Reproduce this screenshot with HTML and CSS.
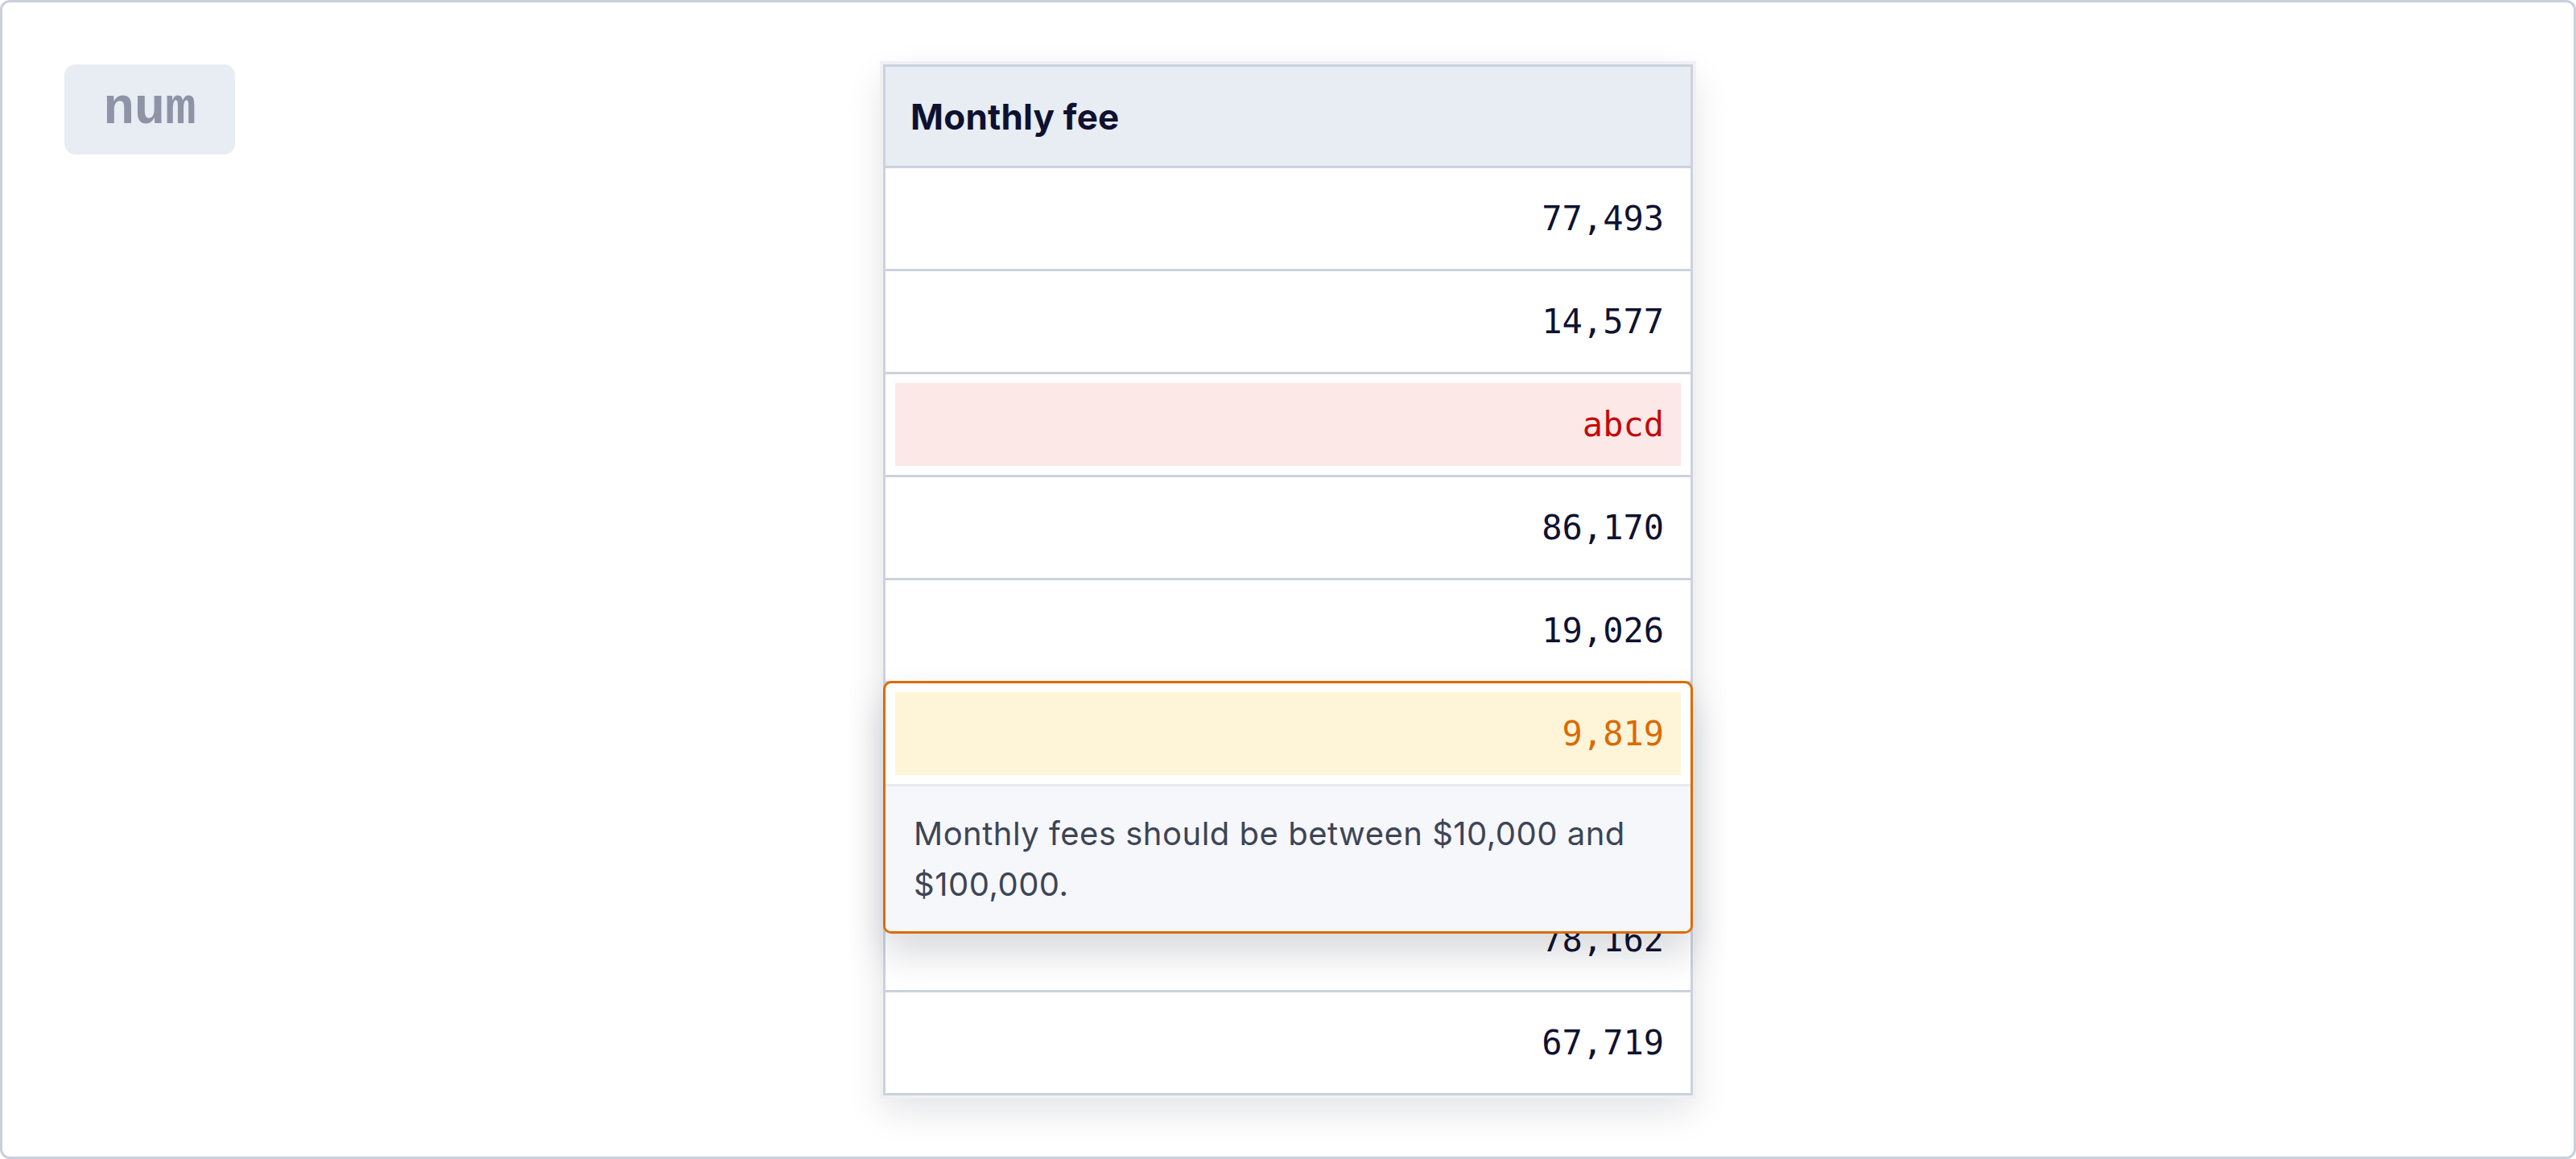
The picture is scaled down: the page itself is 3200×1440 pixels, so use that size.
FILE: index.html
```html
<!DOCTYPE html>
<html lang="en">
<head>
<meta charset="utf-8">
<title>Monthly fee</title>
<link rel="stylesheet" href="styles.css">
</head>
<body>
<div class="frame">
  <div class="badge">num</div>
  <div class="table-wrap">
    <div class="table">
      <div class="head">Monthly fee</div>
      <div class="row"><div class="val">77,493</div></div>
      <div class="row"><div class="val">14,577</div></div>
      <div class="row"><div class="val error">abcd</div></div>
      <div class="row"><div class="val">86,170</div></div>
      <div class="row"><div class="val">19,026</div></div>
      <div class="row"><div class="val"></div></div>
      <div class="row"><div class="val"></div></div>
      <div class="row"><div class="val">78,162</div></div>
      <div class="row"><div class="val">67,719</div></div>
    </div>
    <div class="popup">
      <div class="pcell"><div class="val warn">9,819</div></div>
      <div class="msg">Monthly fees should be between $10,000 and $100,000.</div>
    </div>
  </div>
  <div></div>
</div>
</body>
</html>
```
FILE: styles.css
```css
html, body {
  margin: 0;
  padding: 0;
  background: #ffffff;
}
body {
  width: 3200px;
  height: 1440px;
}
.frame {
  box-sizing: border-box;
  width: 3200px;
  height: 1440px;
  border: 3px solid #c9d0dc;
  border-radius: 12px;
  padding: 77px;
  display: grid;
  grid-template-columns: 1fr 1006px 1fr;
  align-items: start;
}
.badge {
  justify-self: start;
  width: 212px;
  height: 112px;
  border-radius: 14px;
  background: #e8ecf3;
  color: #8e94a6;
  font: 700 64px/112px "Liberation Mono", monospace;
  text-align: center;
}
.table-wrap {
  position: relative;
}
.table {
  border: 3px solid #cbd2de;
  background: #ffffff;
  box-shadow: 0 0 0 4px #f0f0f3, 0 18px 44px rgba(10, 15, 40, 0.12);
}
.head {
  height: 123px;
  background: #e8ecf3;
  padding-left: 31px;
  display: flex;
  align-items: center;
  font: 700 44px "Inter", sans-serif;
  letter-spacing: 0.2px;
  color: #0e1130;
}
.row {
  border-top: 3px solid #cbd2de;
  height: 103px;
  padding: 11px 12px;
}
.val {
  height: 103px;
  display: flex;
  align-items: center;
  justify-content: flex-end;
  padding-right: 21px;
  font: 400 42px "DejaVu Sans Mono", monospace;
  color: #0f1230;
}
.val.error {
  background: #fde8e8;
  color: #c40a0a;
}
.val.warn {
  background: #fef4d8;
  color: #d96b00;
}
.popup {
  position: absolute;
  top: 766px;
  left: 0;
  right: 0;
  border: 3px solid #dc6b00;
  border-radius: 10px;
  background: #ffffff;
  overflow: hidden;
  box-shadow: 0 24px 48px rgba(15, 20, 40, 0.16);
}
.pcell {
  padding: 11px 12px;
}
.msg {
  border-top: 3px solid #e6eaf1;
  background: #f6f7fa;
  padding: 27px 35px;
  font: 400 40px/63px "Inter", sans-serif;
  letter-spacing: 0.5px;
  color: #3d4556;
}
```
